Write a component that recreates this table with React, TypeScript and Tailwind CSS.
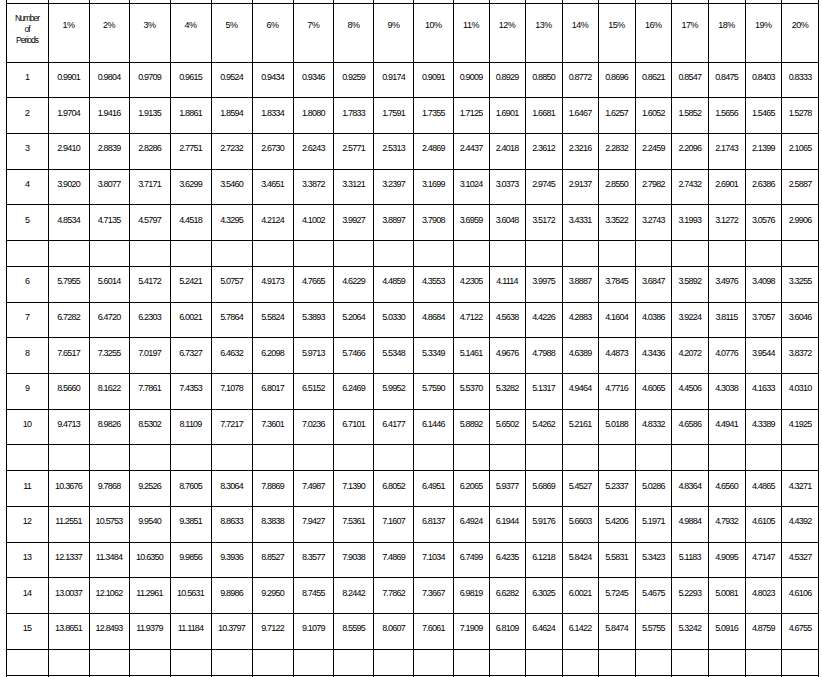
const RATES = ["1%", "2%", "3%", "4%", "5%", "6%", "7%", "8%", "9%", "10%", "11%", "12%", "13%", "14%", "15%", "16%", "17%", "18%", "19%", "20%"];

// column widths measured off the table rules
const COLS = [
  "w-[42px]",
  "w-[41px]", "w-[40px]", "w-[41px]", "w-[41px]", "w-[41px]", "w-[41px]", "w-[40.5px]", "w-[40px]", "w-[40px]", "w-[39.5px]",
  "w-[36px]", "w-[36px]", "w-[37px]", "w-[36px]", "w-[37px]", "w-[36.5px]", "w-[36.5px]", "w-[37px]", "w-[36.5px]", "w-[37px]",
];

const ROWS: string[] = [
  "0.9901 0.9804 0.9709 0.9615 0.9524 0.9434 0.9346 0.9259 0.9174 0.9091 0.9009 0.8929 0.8850 0.8772 0.8696 0.8621 0.8547 0.8475 0.8403 0.8333",
  "1.9704 1.9416 1.9135 1.8861 1.8594 1.8334 1.8080 1.7833 1.7591 1.7355 1.7125 1.6901 1.6681 1.6467 1.6257 1.6052 1.5852 1.5656 1.5465 1.5278",
  "2.9410 2.8839 2.8286 2.7751 2.7232 2.6730 2.6243 2.5771 2.5313 2.4869 2.4437 2.4018 2.3612 2.3216 2.2832 2.2459 2.2096 2.1743 2.1399 2.1065",
  "3.9020 3.8077 3.7171 3.6299 3.5460 3.4651 3.3872 3.3121 3.2397 3.1699 3.1024 3.0373 2.9745 2.9137 2.8550 2.7982 2.7432 2.6901 2.6386 2.5887",
  "4.8534 4.7135 4.5797 4.4518 4.3295 4.2124 4.1002 3.9927 3.8897 3.7908 3.6959 3.6048 3.5172 3.4331 3.3522 3.2743 3.1993 3.1272 3.0576 2.9906",
  "5.7955 5.6014 5.4172 5.2421 5.0757 4.9173 4.7665 4.6229 4.4859 4.3553 4.2305 4.1114 3.9975 3.8887 3.7845 3.6847 3.5892 3.4976 3.4098 3.3255",
  "6.7282 6.4720 6.2303 6.0021 5.7864 5.5824 5.3893 5.2064 5.0330 4.8684 4.7122 4.5638 4.4226 4.2883 4.1604 4.0386 3.9224 3.8115 3.7057 3.6046",
  "7.6517 7.3255 7.0197 6.7327 6.4632 6.2098 5.9713 5.7466 5.5348 5.3349 5.1461 4.9676 4.7988 4.6389 4.4873 4.3436 4.2072 4.0776 3.9544 3.8372",
  "8.5660 8.1622 7.7861 7.4353 7.1078 6.8017 6.5152 6.2469 5.9952 5.7590 5.5370 5.3282 5.1317 4.9464 4.7716 4.6065 4.4506 4.3038 4.1633 4.0310",
  "9.4713 8.9826 8.5302 8.1109 7.7217 7.3601 7.0236 6.7101 6.4177 6.1446 5.8892 5.6502 5.4262 5.2161 5.0188 4.8332 4.6586 4.4941 4.3389 4.1925",
  "10.3676 9.7868 9.2526 8.7605 8.3064 7.8869 7.4987 7.1390 6.8052 6.4951 6.2065 5.9377 5.6869 5.4527 5.2337 5.0286 4.8364 4.6560 4.4865 4.3271",
  "11.2551 10.5753 9.9540 9.3851 8.8633 8.3838 7.9427 7.5361 7.1607 6.8137 6.4924 6.1944 5.9176 5.6603 5.4206 5.1971 4.9884 4.7932 4.6105 4.4392",
  "12.1337 11.3484 10.6350 9.9856 9.3936 8.8527 8.3577 7.9038 7.4869 7.1034 6.7499 6.4235 6.1218 5.8424 5.5831 5.3423 5.1183 4.9095 4.7147 4.5327",
  "13.0037 12.1062 11.2961 10.5631 9.8986 9.2950 8.7455 8.2442 7.7862 7.3667 6.9819 6.6282 6.3025 6.0021 5.7245 5.4675 5.2293 5.0081 4.8023 4.6106",
  "13.8651 12.8493 11.9379 11.1184 10.3797 9.7122 9.1079 8.5595 8.0607 7.6061 7.1909 6.8109 6.4624 6.1422 5.8474 5.5755 5.3242 5.0916 4.8759 4.6755",
];

const cell = "border border-black text-center align-middle px-0";
const num = "text-[9px] leading-[10px] tracking-[-0.8px]";

function BlankRow({ h }: { h: string }) {
  return (
    <tr className={h}>
      {COLS.map((_, i) => (
        <td key={i} className={cell} />
      ))}
    </tr>
  );
}

export default function App() {
  const groups = [ROWS.slice(0, 5), ROWS.slice(5, 10), ROWS.slice(10, 15)];

  return (
    <div className="h-[677px] w-[822px] overflow-hidden bg-white pl-[5.5px] font-['Liberation_Sans',Arial,sans-serif] text-black">
      <table className="table-fixed border-collapse">
        <colgroup>
          {COLS.map((w, i) => (
            <col key={i} className={w} />
          ))}
        </colgroup>
        <tbody>
          {/* sliver of the row above, cut off by the crop */}
          <tr className="h-[3px]">
            {COLS.map((_, i) => (
              <td key={i} className="border-x border-black p-0" />
            ))}
          </tr>
          <tr className="h-[59px]">
            <td className={`${cell} pb-[6px]`}>
              <div className="text-[8.5px] leading-[11px] tracking-[-1px]">
                Number
                <br />
                of
                <br />
                Periods
              </div>
            </td>
            {RATES.map((r) => (
              <td key={r} className={`${cell} pb-[20px]`}>
                <span className="text-[9px] leading-[10px] tracking-[-0.5px]">{r}</span>
              </td>
            ))}
          </tr>
          {groups.map((g, gi) => (
            <>
              {g.map((line, ri) => {
                const n = gi * 5 + ri + 1;
                return (
                  <tr key={n} className="h-[35.7px]">
                    <td className={`${cell} pb-[10px]`}>
                      <span className={num}>{n}</span>
                    </td>
                    {line.split(" ").map((v, ci) => (
                      <td key={ci} className={`${cell} pb-[10px]`}>
                        <span className={num}>{v}</span>
                      </td>
                    ))}
                  </tr>
                );
              })}
              <BlankRow key={`b${gi}`} h="h-[26px]" />
            </>
          ))}
          <BlankRow h="h-[36px]" />
        </tbody>
      </table>
    </div>
  );
}
